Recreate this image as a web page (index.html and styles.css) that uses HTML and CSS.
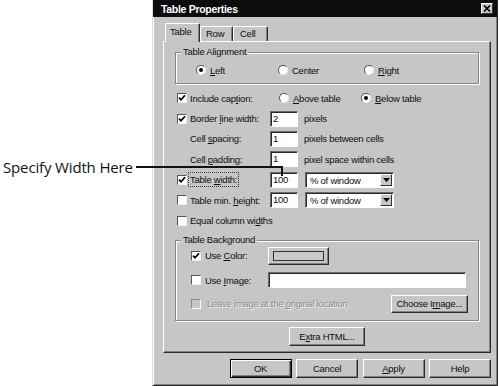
FILE: index.html
```html
<!DOCTYPE html>
<html lang="en">
<head>
  <meta charset="UTF-8">
  <title>Table Properties</title>
  <link rel="stylesheet" href="styles.css">
</head>
<body>

<div class="page">
  <div class="note">Specify Width Here</div>
  <div class="leader"></div>

  <div class="dialog">
    <div class="titlebar">
      <span>Table Properties</span>
      <span class="close">
        <svg width="8" height="7" viewBox="0 0 8 7"><path d="M1 0.5l6 6M7 0.5l-6 6" stroke="#000" stroke-width="1.6"/></svg>
      </span>
    </div>

    <div class="content">
      <!-- Tabs -->
      <div class="tabs">
        <div class="tab active">Table</div>
        <div class="tab tab-row">Row</div>
        <div class="tab tab-cell">Cell</div>
      </div>

      <div class="panel">
        <div class="group align-group">
          <div class="group-title">Table Alignment</div>
          <div class="radio-row">
            <div class="opt"><span class="radio on"></span><span><u>L</u>eft</span></div>
            <div class="opt"><span class="radio"></span><span>Center</span></div>
            <div class="opt"><span class="radio"></span><span><u>R</u>ight</span></div>
          </div>
        </div>

        <div class="rows">
          <div class="row">
            <span class="check on"><svg width="8" height="8" viewBox="0 0 8 8"><path d="M1 3.6l2 2.2 4-4.6" stroke="#000" stroke-width="1.7" fill="none"/></svg></span>
            <span class="lbl">Include cap<u>t</u>ion:</span>
            <div class="opt caption-opt"><span class="radio"></span><span><u>A</u>bove table</span></div>
            <div class="opt"><span class="radio on"></span><span><u>B</u>elow table</span></div>
          </div>
          <div class="row">
            <span class="check on"><svg width="8" height="8" viewBox="0 0 8 8"><path d="M1 3.6l2 2.2 4-4.6" stroke="#000" stroke-width="1.7" fill="none"/></svg></span>
            <span class="lbl">Border <u>l</u>ine width:</span>
            <span class="field">2</span>
            <span class="unit">pixels</span>
          </div>
          <div class="row">
            <span class="lbl indent">Cell <u>s</u>pacing:</span>
            <span class="field">1</span>
            <span class="unit">pixels between cells</span>
          </div>
          <div class="row">
            <span class="lbl indent">Cell <u>p</u>adding:</span>
            <span class="field">1</span>
            <span class="unit">pixel space within cells</span>
          </div>
          <div class="row">
            <span class="check on"><svg width="8" height="8" viewBox="0 0 8 8"><path d="M1 3.6l2 2.2 4-4.6" stroke="#000" stroke-width="1.7" fill="none"/></svg></span>
            <span class="lbl"><span class="focus">Table <u>w</u>idth:</span></span>
            <span class="field">100</span>
            <span class="select"><span>% of window</span><span class="arrow"><svg width="7" height="4" viewBox="0 0 7 4"><path d="M0 0h7L3.5 4z" fill="#000"/></svg></span></span>
          </div>
          <div class="row">
            <span class="check"></span>
            <span class="lbl">Table min. <u>h</u>eight:</span>
            <span class="field">100</span>
            <span class="select"><span>% of window</span><span class="arrow"><svg width="7" height="4" viewBox="0 0 7 4"><path d="M0 0h7L3.5 4z" fill="#000"/></svg></span></span>
          </div>
          <div class="row">
            <span class="check"></span>
            <span>Equal column wi<u>d</u>ths</span>
          </div>
        </div>

        <div class="group bg-group">
          <div class="group-title">Table Background</div>
          <div class="bg-row color-row">
            <span class="check on"><svg width="8" height="8" viewBox="0 0 8 8"><path d="M1 3.6l2 2.2 4-4.6" stroke="#000" stroke-width="1.7" fill="none"/></svg></span>
            <span class="bg-lbl">Use <u>C</u>olor:</span>
            <span class="btn color-btn"><span class="swatch"></span></span>
          </div>
          <div class="bg-row image-row">
            <span class="check"></span>
            <span class="bg-lbl">Use <u>I</u>mage:</span>
            <span class="field wide"></span>
          </div>
          <div class="bg-row leave-row">
            <span class="check off"></span>
            <span class="disabled">Leave image at the <u>o</u>riginal location</span>
            <span class="btn choose-btn">Choose I<u>m</u>age...</span>
          </div>
        </div>

        <span class="btn extra-btn">E<u>x</u>tra HTML...</span>
      </div>

      <div class="actions">
        <span class="btn default">OK</span>
        <span class="btn">Cancel</span>
        <span class="btn"><u>A</u>pply</span>
        <span class="btn">Help</span>
      </div>
    </div>
  </div>
</div>

</body>
</html>
```

FILE: styles.css
```css
body {
  margin: 0;
  background-color: #fff;
  font-family: "Liberation Sans", Arial, sans-serif;
}
.page {
  position: relative;
  display: flex;
  width: 500px;
  height: 386px;
}
.note {
  width: 152px;
  box-sizing: border-box;
  padding: 159px 0 0 3px;
  font-family: "Open Sans", sans-serif;
  font-size: 15px;
  line-height: 17px;
  letter-spacing: -0.15px;
  color: #111;
  white-space: nowrap;
}
.leader {
  position: absolute;
  left: 136px;
  top: 166px;
  width: 145px;
  height: 8px;
  border-top: 2px solid #111;
  border-right: 2px solid #111;
}

/* dialog frame */
.dialog {
  width: 346px;
  height: 386px;
  box-sizing: border-box;
  background-color: #c6c6c6;
  border-left: 1px solid #dcdcdc;
  border-right: 1px solid #2a2a2a;
  border-bottom: 1px solid #2a2a2a;
  box-shadow: inset 1px 0 #fff, inset -1px -1px #808080;
  font-size: 9.5px;
  letter-spacing: -0.25px;
  color: #0e0e0e;
}
.titlebar {
  height: 17px;
  display: flex;
  align-items: center;
  justify-content: space-between;
  padding: 0 4px 0 8px;
  background-color: #0c0c0c;
  color: #fff;
  font-weight: bold;
  font-size: 10.5px;
  letter-spacing: -0.3px;
}
.close {
  width: 12px;
  height: 11px;
  box-sizing: border-box;
  display: flex;
  align-items: center;
  justify-content: center;
  background-color: #c6c6c6;
  border: 1px solid;
  border-color: #fff #333 #333 #fff;
}
.content {
  padding: 6px 6px 0 10px;
}

/* tabs */
.tabs {
  display: flex;
  align-items: flex-end;
  height: 18px;
  padding-left: 2px;
}
.tab {
  height: 15px;
  width: 35px;
  box-sizing: border-box;
  padding-left: 4px;
  line-height: 13px;
  border: 1px solid;
  border-bottom: none;
  border-color: #fff #2a2a2a #fff #fff;
  border-radius: 2px 2px 0 0;
  box-shadow: inset -1px 0 #808080;
}
.tab.active {
  position: relative;
  z-index: 1;
  height: 19px;
  margin-bottom: -1px;
  padding-left: 4px;
  line-height: 15px;
  background-color: #c6c6c6;
}
.tab-row {
  width: 33px;
  padding-left: 5px;
}
.tab-cell {
  padding-left: 6px;
}

.panel {
  height: 312px;
  box-sizing: border-box;
  padding: 10px 11px 0;
  border: 1px solid;
  border-color: #fff #2a2a2a #2a2a2a #fff;
  box-shadow: inset -1px -1px #808080;
}

/* group boxes */
.group {
  box-sizing: border-box;
  border: 1px solid #858585;
  box-shadow: inset 1px 1px #fff, 1px 1px #fff;
}
.group-title {
  width: fit-content;
  height: 12px;
  line-height: 12px;
  margin: -7px 0 0 5px;
  padding: 0 2px;
  background-color: #c6c6c6;
}
.align-group {
  height: 32px;
}
.radio-row {
  display: grid;
  grid-template-columns: 82px 86px auto;
  align-items: center;
  height: 14px;
  margin-top: 5px;
  padding-left: 20px;
}
.opt {
  display: flex;
  align-items: center;
  gap: 4px;
}
.radio {
  width: 10px;
  height: 10px;
  flex: none;
  box-sizing: border-box;
  display: flex;
  align-items: center;
  justify-content: center;
  border-radius: 50%;
  background-color: #fff;
  border: 1px solid;
  border-color: #555 #eee #eee #555;
}
.radio.on::after {
  content: "";
  width: 4px;
  height: 4px;
  border-radius: 50%;
  background-color: #000;
}

/* option rows */
.rows {
  margin-top: 4px;
}
.row {
  display: flex;
  align-items: center;
  height: 20.4px;
  padding-left: 2px;
}
.check {
  width: 10px;
  height: 10px;
  flex: none;
  box-sizing: border-box;
  display: flex;
  align-items: center;
  justify-content: center;
  margin-right: 3px;
  background-color: #fff;
  border: 1px solid;
  border-color: #555 #f0f0f0 #f0f0f0 #555;
}
.check.off {
  background-color: #c6c6c6;
  border-color: #8a8a8a #fff #fff #8a8a8a;
}
.lbl {
  width: 80px;
  flex: none;
}
.lbl.indent {
  margin-left: 13px;
}
.focus {
  outline: 1px dotted #333;
  outline-offset: 1px;
}
.caption-opt {
  width: 82px;
  margin-left: 9px;
}
.field {
  width: 28px;
  height: 16px;
  box-sizing: border-box;
  flex: none;
  padding-left: 2px;
  line-height: 14px;
  background-color: #fff;
  border: 1px solid;
  border-color: #6a6a6a #fff #fff #6a6a6a;
  box-shadow: inset 1px 1px #2a2a2a;
}
.field.wide {
  width: 198px;
}
.unit {
  margin-left: 6px;
}
.select {
  width: 89px;
  height: 16px;
  box-sizing: border-box;
  display: flex;
  justify-content: space-between;
  margin-left: 7px;
  padding: 1px 1px 1px 4px;
  line-height: 13px;
  background-color: #fff;
  border: 1px solid;
  border-color: #6a6a6a #fff #fff #6a6a6a;
  box-shadow: inset 1px 1px #2a2a2a;
}
.arrow {
  width: 12px;
  box-sizing: border-box;
  display: flex;
  align-items: center;
  justify-content: center;
  background-color: #c6c6c6;
  border: 1px solid;
  border-color: #fff #333 #333 #fff;
}

/* background group */
.bg-group {
  height: 81px;
  margin-top: 9px;
}
.bg-row {
  display: flex;
  align-items: center;
  padding-left: 15px;
}
.bg-row .check {
  margin-right: 4px;
}
.bg-lbl {
  width: 63px;
}
.color-row {
  height: 18px;
  margin-top: 1px;
}
.image-row {
  height: 17px;
  margin-top: 7px;
}
.leave-row {
  height: 18px;
  margin-top: 6px;
}
.leave-row .check {
  margin-right: 6px;
}
.disabled {
  color: #8c8c8c;
  text-shadow: 1px 1px #f4f4f4;
}

/* buttons */
.btn {
  height: 19px;
  box-sizing: border-box;
  display: flex;
  align-items: center;
  justify-content: center;
  background-color: #c6c6c6;
  border: 1px solid;
  border-color: #fff #2a2a2a #2a2a2a #fff;
  box-shadow: inset -1px -1px #808080;
}
.color-btn {
  width: 61px;
  height: 18px;
  padding: 3px 4px;
}
.swatch {
  width: 100%;
  height: 100%;
  box-sizing: border-box;
  background-color: #c9c9c9;
  border: 1px solid #333;
}
.choose-btn {
  width: 77px;
  height: 18px;
  margin: 0 10px 0 auto;
}
.extra-btn {
  width: 76px;
  margin: 6px auto 0;
}
.actions {
  display: flex;
  justify-content: flex-end;
  gap: 4.5px;
  margin-top: 6px;
}
.actions .btn {
  width: 62px;
}
.btn.default {
  border: 1px solid #000;
  box-shadow: inset 1px 1px #fff, inset -1px -1px #333, inset -2px -2px #808080;
}
```
